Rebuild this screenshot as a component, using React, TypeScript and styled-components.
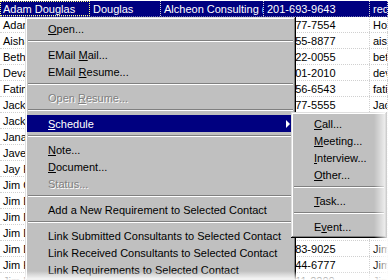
import styled, { createGlobalStyle } from 'styled-components'

interface RowData {
  name: string
  last: string
  company: string
  phone: string
  note: string
}

type MenuEntry =
  | { kind: 'item'; label: string; key?: number; disabled?: boolean; active?: boolean; submenu?: boolean }
  | { kind: 'sep' }

const rows: RowData[] = [
  { name: 'Adam Douglas', last: 'Douglas', company: 'Alcheon Consulting (NJ)', phone: '201-693-9643', note: 'red' },
  { name: 'Adam Baker', last: 'Baker', company: 'Holmdel Systems', phone: '732-677-7554', note: 'Holmdel' },
  { name: 'Aisha Khan', last: 'Khan', company: 'Infotech', phone: '908-655-8877', note: 'aisha' },
  { name: 'Beth Moore', last: 'Moore', company: 'Moore Assoc.', phone: '973-622-0055', note: 'beth' },
  { name: 'Deval Shah', last: 'Shah', company: 'Sigma Corp', phone: '201-601-2010', note: 'deval' },
  { name: 'Fatima Ali', last: 'Ali', company: 'Ali Group', phone: '732-656-6543', note: 'fatima' },
  { name: 'Jack Brown', last: 'Brown', company: 'Brown Ltd', phone: '908-677-5555', note: 'Jack' },
  { name: 'Jack Wilson', last: 'Wilson', company: 'Wilson Inc', phone: '973-644-1212', note: 'Jack' },
  { name: 'Jana Novak', last: 'Novak', company: 'Novak & Co', phone: '201-633-4040', note: 'Jana' },
  { name: 'Javed Iqbal', last: 'Iqbal', company: 'Iqbal Tech', phone: '732-622-9090', note: 'Javed' },
  { name: 'Jay Fisher', last: 'Fisher', company: 'Fisher Labs', phone: '908-611-3030', note: 'Jay' },
  { name: 'Jim Carter', last: 'Carter', company: 'Carter Corp', phone: '973-655-2121', note: 'Jim' },
  { name: 'Jim Davis', last: 'Davis', company: 'Davis Group', phone: '201-677-8080', note: 'Jim' },
  { name: 'Jim Dunn', last: 'Dunn', company: 'Dunn Systems', phone: '732-688-1414', note: 'Jim' },
  { name: 'Jim Dolan', last: 'Dolan', company: 'Dolan Inc', phone: '908-666-0070', note: 'Jim' },
  { name: 'Jim Drake', last: 'Drake', company: 'Drake Ltd', phone: '973-683-9025', note: 'Jim' },
  { name: 'Jim Hart', last: 'Hart', company: 'Hart & Sons', phone: '201-644-6777', note: 'Jim' },
  { name: 'Jim Hall', last: 'Hall', company: 'Hall Corp', phone: '732-611-2200', note: 'Jim' },
]

const mainMenu: MenuEntry[] = [
  { kind: 'item', label: 'Open...', key: 0 },
  { kind: 'sep' },
  { kind: 'item', label: 'EMail Mail...', key: 6 },
  { kind: 'item', label: 'EMail Resume...', key: 6 },
  { kind: 'sep' },
  { kind: 'item', label: 'Open Resume...', key: 5, disabled: true },
  { kind: 'sep' },
  { kind: 'item', label: 'Schedule', key: 0, active: true, submenu: true },
  { kind: 'sep' },
  { kind: 'item', label: 'Note...', key: 0 },
  { kind: 'item', label: 'Document...', key: 0 },
  { kind: 'item', label: 'Status...', disabled: true },
  { kind: 'sep' },
  { kind: 'item', label: 'Add a New Requirement to Selected Contact' },
  { kind: 'sep' },
  { kind: 'item', label: 'Link Submitted Consultants to Selected Contact' },
  { kind: 'item', label: 'Link Received Consultants to Selected Contact' },
  { kind: 'item', label: 'Link Requirements to Selected Contact' },
]

const scheduleMenu: MenuEntry[] = [
  { kind: 'item', label: 'Call...', key: 0 },
  { kind: 'item', label: 'Meeting...', key: 0 },
  { kind: 'item', label: 'Interview...', key: 0 },
  { kind: 'item', label: 'Other...', key: 0 },
  { kind: 'sep' },
  { kind: 'item', label: 'Task...', key: 0 },
  { kind: 'sep' },
  { kind: 'item', label: 'Event...', key: 1 },
]

const GlobalStyle = createGlobalStyle`
  body {
    margin: 0;
    background: #fff;
    font-family: "Liberation Sans", Arial, sans-serif;
    font-size: 11px;
  }
`

const Label = ({ text, at }: { text: string; at?: number }) => {
  if (at === undefined) return <>{text}</>
  return (
    <>
      {text.slice(0, at)}
      <Key>{text[at]}</Key>
      {text.slice(at + 1)}
    </>
  )
}

const Menu = ({ entries }: { entries: MenuEntry[] }) => (
  <>
    {entries.map((entry, i) =>
      entry.kind === 'sep' ? (
        <Separator key={i} />
      ) : (
        <Item key={i} $active={entry.active} $disabled={entry.disabled}>
          <span>
            <Label text={entry.label} at={entry.key} />
          </span>
          {entry.submenu && <Arrow />}
        </Item>
      ),
    )}
  </>
)

export default function App() {
  return (
    <Screen>
      <GlobalStyle />
      <Grid>
        {rows.map((row, i) => (
          <Row key={i} $selected={i === 0}>
            <Cell $focus={i === 0}>{row.name}</Cell>
            <Cell>{row.last}</Cell>
            <Cell>{row.company}</Cell>
            <Cell>{row.phone}</Cell>
            <Cell>{row.note}</Cell>
          </Row>
        ))}
      </Grid>
      <MainMenu>
        <Menu entries={mainMenu} />
      </MainMenu>
      <SubMenu>
        <Menu entries={scheduleMenu} />
      </SubMenu>
      <RightFade />
      <BottomFade />
    </Screen>
  )
}

const Screen = styled.div`
  position: relative;
  width: 388px;
  height: 280px;
  overflow: hidden;
  background: #fff;
`

const Grid = styled.div`
  display: flex;
  flex-direction: column;
  padding-top: 1px;
`

const Row = styled.div<{ $selected?: boolean }>`
  display: grid;
  grid-template-columns: 90px 71px 103px 106px 1fr;
  height: 16px;
  box-sizing: border-box;
  border-bottom: 1px dotted ${(p) => (p.$selected ? '#6a6aa8' : '#d0d0d0')};
  background: ${(p) => (p.$selected ? '#000080' : '#fff')};
  color: ${(p) => (p.$selected ? '#fff' : '#000')};
`

const Cell = styled.div<{ $focus?: boolean }>`
  line-height: 16px;
  padding-left: 3px;
  white-space: nowrap;
  overflow: hidden;
  box-sizing: border-box;
  border-right: 1px dotted #d0d0d0;
  outline: ${(p) => (p.$focus ? '1px dotted #ffff80' : 'none')};
  outline-offset: -1px;
`

const MenuPanel = styled.div`
  position: absolute;
  box-sizing: border-box;
  display: flex;
  flex-direction: column;
  padding: 3px 2px;
  background: #c0c0c0;
  box-shadow: inset -1px -1px #000, inset 1px 1px #dfdfdf, inset -2px -2px #808080, inset 2px 2px #fff;
`

const MainMenu = styled(MenuPanel)`
  left: 25px;
  top: 17px;
  width: 271px;
`

const SubMenu = styled(MenuPanel)`
  left: 291px;
  top: 112px;
  width: 96px;
`

const Item = styled.div<{ $active?: boolean; $disabled?: boolean }>`
  display: flex;
  align-items: center;
  justify-content: space-between;
  height: 17px;
  padding: 0 4px 0 21px;
  white-space: nowrap;
  background: ${(p) => (p.$active ? '#000080' : 'transparent')};
  color: ${(p) => (p.$active ? '#fff' : p.$disabled ? '#808080' : '#000')};
  text-shadow: ${(p) => (p.$disabled ? '1px 1px 0 #fff' : 'none')};
`

const Key = styled.span`
  text-decoration: underline;
  text-underline-offset: 1px;
`

const Arrow = styled.span`
  width: 0;
  height: 0;
  border-top: 4px solid transparent;
  border-bottom: 4px solid transparent;
  border-left: 4px solid currentColor;
`

const Separator = styled.div`
  margin: 3px 1px 4px;
  border-top: 1px solid #808080;
  border-bottom: 1px solid #fff;
`

const RightFade = styled.div`
  position: absolute;
  top: 110px;
  right: 0;
  bottom: 0;
  width: 14px;
  background: linear-gradient(to right, rgba(255, 255, 255, 0), rgba(255, 255, 255, 0.9));
`

const BottomFade = styled.div`
  position: absolute;
  left: 0;
  right: 0;
  bottom: 0;
  height: 9px;
  background: linear-gradient(rgba(255, 255, 255, 0), rgba(255, 255, 255, 0.4) 40%, rgba(255, 255, 255, 0.95));
`
